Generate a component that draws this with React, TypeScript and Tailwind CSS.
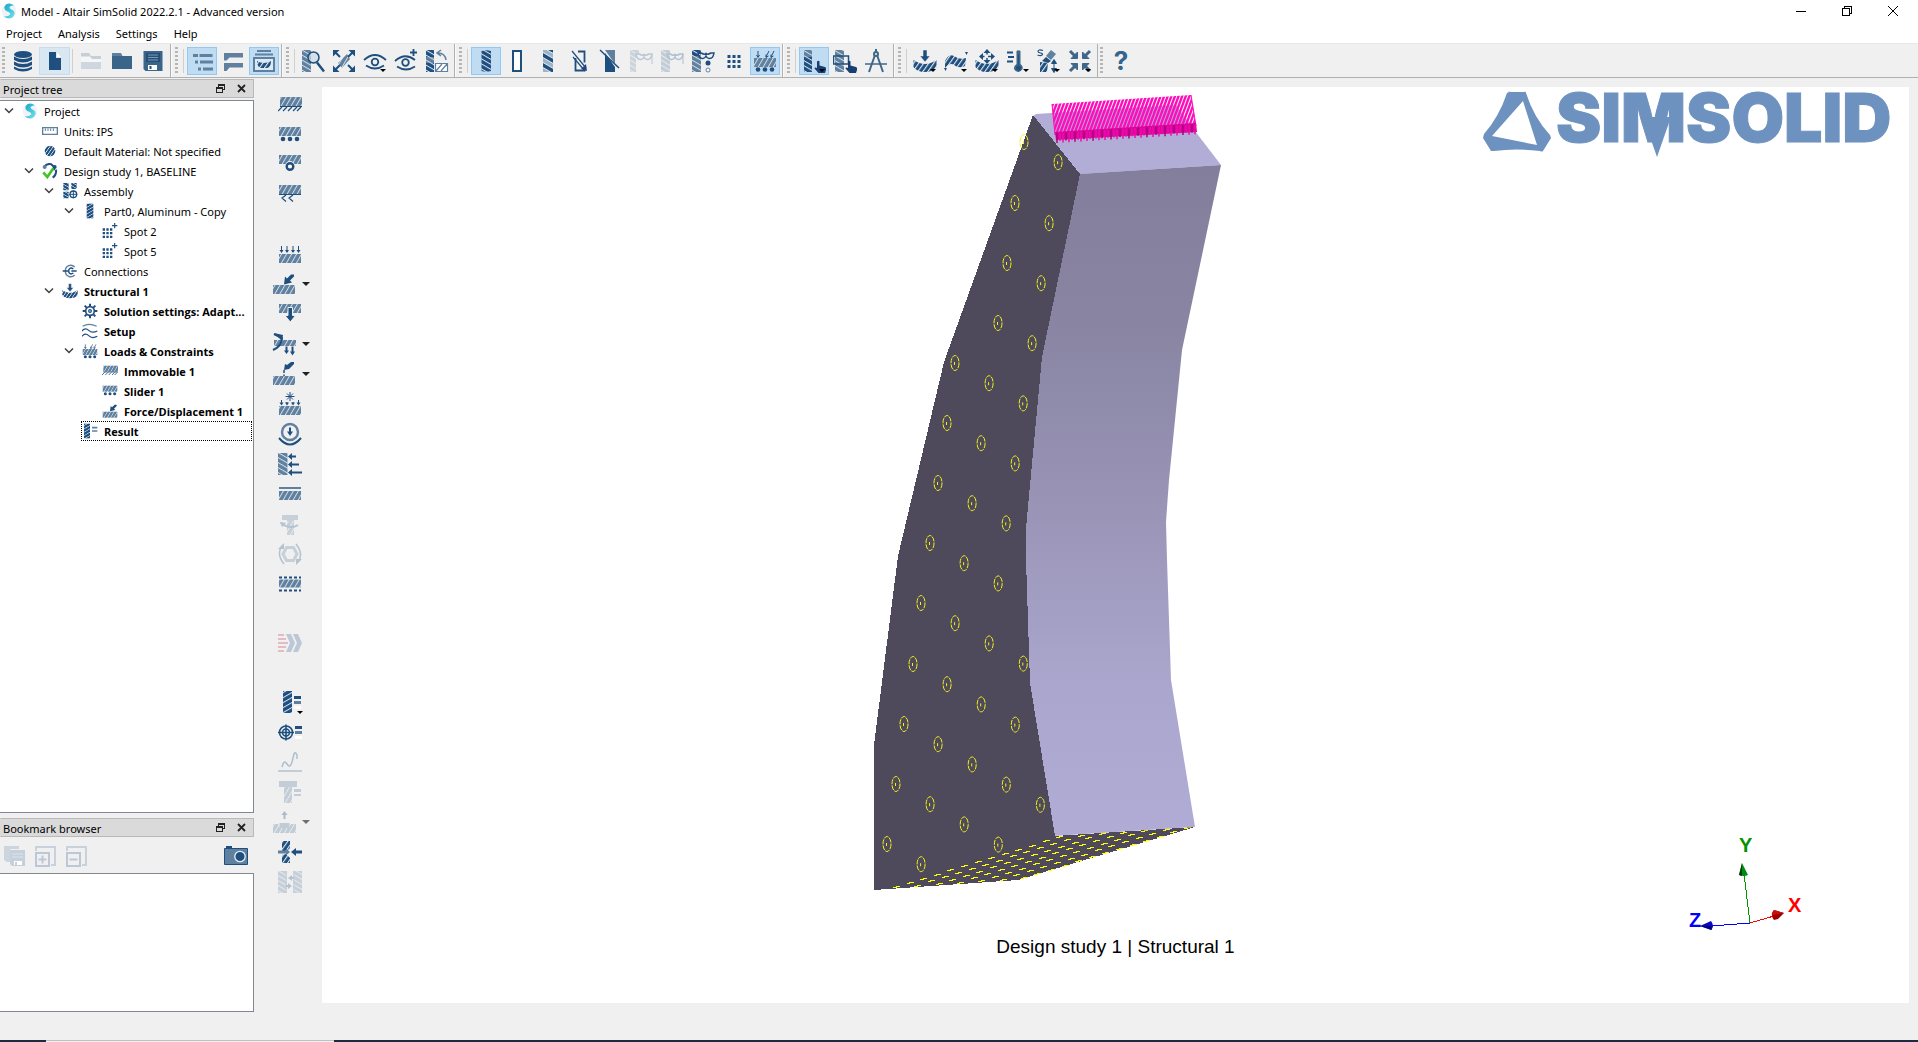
import React, { ReactNode } from "react";

const D = "#1f4f7f";
const M = "#5f809f";

/* Shared hatch fills used by nearly every icon */
function Hatches() {
  return (
    <svg className="absolute h-0 w-0" aria-hidden="true">
      <defs>
        <pattern id="hm" width="5" height="6" patternUnits="userSpaceOnUse" patternTransform="skewX(-30)">
          <rect width="5" height="6" fill={M} />
          <rect width="1.1" height="6" fill="#d6dfe8" />
        </pattern>
        <pattern id="hd" width="5" height="6" patternUnits="userSpaceOnUse" patternTransform="skewX(-35)">
          <rect width="5" height="6" fill={D} />
          <rect width="1.3" height="6" fill="#e6edf3" />
        </pattern>
        <pattern id="vm" width="6" height="5" patternUnits="userSpaceOnUse" patternTransform="skewY(30)">
          <rect width="6" height="5" fill={M} />
          <rect width="6" height="1.1" fill="#d6dfe8" />
        </pattern>
        <pattern id="vd" width="6" height="5" patternUnits="userSpaceOnUse" patternTransform="skewY(-30)">
          <rect width="6" height="5" fill={D} />
          <rect width="6" height="1.1" fill="#dce8f2" />
        </pattern>
        <pattern id="vx" width="6" height="5" patternUnits="userSpaceOnUse" patternTransform="skewY(30)">
          <rect width="6" height="5" fill={D} />
          <rect width="6" height="1.1" fill="#dce8f2" />
        </pattern>
        <pattern id="vs" width="6" height="10" patternUnits="userSpaceOnUse" patternTransform="skewY(30)">
          <rect width="6" height="10" fill="#9db3c8" />
          <rect width="6" height="4" fill={D} />
          <rect y="4" width="6" height="1" fill="#e4eaf0" />
          <rect y="9" width="6" height="1" fill="#e4eaf0" />
        </pattern>
        <linearGradient id="sg" x1="0" y1="0" x2="1" y2="1">
          <stop offset="0" stopColor="#1f9fc0" />
          <stop offset="0.5" stopColor="#3ec6dc" />
          <stop offset="1" stopColor="#7fe0ea" />
        </linearGradient>
      </defs>
    </svg>
  );
}

const mask = (x: number, y: number, c: string) => (
  <path d={`M${x} ${y}h3q4 2 5 0.5q1 1.5 5-0.5h3q-1 6-5 5.5q-2 0-3-2.5q-1 2.5-3 2.5q-4 0.500-5-5.500z`} fill="none" stroke={c} strokeWidth="1.5" />
);
const hand = (
  <path d="M15 12.500q1.500-1.500 2.500 0v4l5.500 1.500q1.500 0.500 1 3l-1 3h-6.500l-4-4.500q0-1.500 2.500-0.500z" fill="#173f72" />
);
const smile = <path d="M0.500 11q6 4 11.500 4t11.500-4v7q-3.500 5-11.500 5t-11.500-5z" fill="url(#hd)" />;

const art: Record<string, ReactNode> = {
  s: (
    <g>
      <circle cx="12" cy="12" r="11" fill="#eef3f5" />
      <path d="M20 4Q14 -1 8 2Q2 7 8 12Q14 14 14 17Q12 21 4 20Q11 26 18 21Q23 15 18 11Q12 9 13 6Q15 3 20 4z" fill="url(#sg)" />
    </g>
  ),
  db: (
    <g fill={D}>
      <ellipse cx="12" cy="5.500" rx="9" ry="3.500" />
      <path d="M3 7.500q9 5 18 0v3.500q-9 5-18 0zM3 12.500q9 5 18 0v3.500q-9 5-18 0zM3 17.500q9 5 18 0v2.500q-9 5-18 0z" />
    </g>
  ),
  file: (
    <g>
      <path d="M6 3h7v6h5v12h-12z" fill={D} />
      <path d="M14 3.500l4 4.500h-4z" fill="#fff" />
    </g>
  ),
  open: (
    <g>
      <path d="M2 4h8l2 3h10v13h-20z" fill="#c5cfd8" />
      <path d="M2 7.500h9l2 2.500h9v3h-20z" fill="#f4f6f8" />
      <path d="M2 13h20v7h-20z" fill="#ced7df" />
    </g>
  ),
  folder: (
    <g>
      <path d="M2 4h9l1.500 3h-10.500z" fill={M} />
      <path d="M2 7h20v13h-20z" fill="#3b6489" />
    </g>
  ),
  save: (
    <g>
      <path d="M2.500 2h19v20h-17l-2-2z" fill="#3b6489" />
      <path d="M5 4h14v9h-14z" fill="#244f78" />
      <path d="M7 6h10M7 8.500h10M7 11h10" stroke="#7d9ab4" />
      <path d="M7 16h9v5h-9z" fill="#fff" />
      <path d="M8.500 17h2v3h-2z" fill={D} />
    </g>
  ),
  list: (
    <g fill={M}>
      <path d="M3 5h5v3h-5zM9.500 5h13v3h-13zM5 11.500h3v3h-3zM10 11.500h13v3h-13zM8 18.500h3v3h-3zM13 18.500h10v3h-10z" />
    </g>
  ),
  chat: <path d="M3 4h19v4.500h-13.500l-3 3h-2.500zM3 14h19v4.500h-13.500l-3 3.500h-2.500z" fill={M} />,
  win: (
    <g>
      <path d="M5 1h14v2h-14zM3 4.500h18v2h-18z" fill={M} />
      <path d="M2 9h20v13h-20z" fill="#dbe9f5" stroke={M} strokeWidth="2" />
      <path d="M5 12q7 4 14 0q0 6-4 7h-6q-4-1-4-7z" fill="url(#hd)" />
    </g>
  ),
  find: (
    <g>
      <path d="M1 1h9v22h-9z" fill="url(#vm)" />
      <path d="M16 13.500l7 9" stroke={D} strokeWidth="2.500" />
      <circle cx="12.500" cy="8.500" r="5.500" fill="#c9d8e6" fillOpacity="0.700" stroke={D} strokeWidth="1.500" />
    </g>
  ),
  explode: (
    <g>
      <path d="M6 14l9-9l3 5l-8 9z" fill="url(#hm)" />
      <path d="M3 3l5 5M21 3l-5 5M3 21l5-5M21 21l-5-5" stroke={D} strokeWidth="2" />
      <path d="M1 1h6.500l-6.500 6.500zM23 1h-6.500l6.500 6.500zM1 23h6.500l-6.500-6.500zM23 23h-6.500l6.500-6.500z" fill={D} />
    </g>
  ),
  eye: (
    <g fill="none" stroke={D} strokeWidth="1.800">
      <path d="M1 11q11-10 22 0M3 16.500q9 6 18 0" />
      <circle cx="12" cy="13" r="3.300" />
    </g>
  ),
  eyeplus: (
    <g fill="none" stroke={D} strokeWidth="1.800">
      <path d="M1 12q10-9 20-1M3 17.500q9 6 18 0M19.500 0v7M16 3.500h7" />
      <circle cx="11.500" cy="13.500" r="3.300" />
    </g>
  ),
  rotate: (
    <g>
      <path d="M1 1h8v22h-8z" fill="url(#vm)" />
      <path d="M1 1h8v7h-8zM1 14h8v9h-8z" fill="url(#vx)" />
      <path d="M10.500 14.500h12v8h-12zM11 22l6-7M16 22l6-7" fill="#fff" stroke={M} strokeWidth="1.200" />
      <path d="M13 4q7 0 8 7M16 1l-4 3l4 3" fill="none" stroke={M} strokeWidth="1.500" />
    </g>
  ),
  part: <path d="M7.500 2q5-1.500 9.500 0v20q-5 1.500-9.500 0z" fill="url(#vx)" />,
  treepart: <path d="M7 1h10v22h-10z" fill="url(#vd)" />,
  outline: <path d="M8 2h8v20h-8z" fill="#fff" stroke={D} strokeWidth="2" />,
  partlight: <path d="M7 1h10v22h-10z" fill="url(#vs)" />,
  section: (
    <g>
      <path d="M8.500 9v12.500h9v-3M11 2.500h6.500v11" fill="none" stroke={D} strokeWidth="1.800" />
      <path d="M5 2l14 17M6 8l12 14" stroke={D} strokeWidth="1.200" />
      <path d="M20 22l-1-7l-5 5z" fill="#27467f" />
    </g>
  ),
  half: (
    <g>
      <path d="M7 1h10v14z" fill={M} />
      <path d="M7 4v19h10v-5z" fill={D} />
      <path d="M2 1l19 18" stroke={D} strokeWidth="1.500" />
    </g>
  ),
  mask1: (
    <g opacity="0.250">
      <path d="M1 1h9v4h-3v18h-6z" fill="url(#vm)" />
      {mask(7, 5, D)}
      <path d="M23 6v9" stroke={D} />
    </g>
  ),
  mask2: (
    <g opacity="0.300">
      <path d="M1 1h9v22h-9z" fill="url(#vm)" />
      {mask(7, 5, D)}
      <path d="M23 6v9" stroke={D} />
    </g>
  ),
  mask3: (
    <g>
      <path d="M1 1h9v22h-9z" fill="url(#vm)" />
      <path d="M1 1h9v6h-9z" fill="url(#vx)" />
      {mask(7, 4, D)}
      <circle cx="17" cy="14" r="2.500" fill={D} />
      <circle cx="17" cy="21" r="2" fill="#fff" stroke={M} />
    </g>
  ),
  dots: <path d="M5.500 6h3v3h-3zM10.500 6h3v3h-3zM15.500 6h3v3h-3zM5.500 11h3v3h-3zM10.500 11h3v3h-3zM15.500 11h3v3h-3zM5.500 16h3v3h-3zM10.500 16h3v3h-3zM15.500 16h3v3h-3z" fill={D} />,
  loads: (
    <g>
      <path d="M1 9h22v9h-22z" fill="url(#hm)" />
      <path d="M5 2v6M3.500 6l1.500 2.500l1.500-2.500M16 2l-3 6M13 5.500v3l2.500-1.500M21 2l-3 6M18 5.500v3l2.500-1.500" stroke={D} fill="none" />
      <circle cx="5" cy="20.500" r="2.300" fill={D} />
      <circle cx="12" cy="20.500" r="2.300" fill={D} />
      <circle cx="19" cy="20.500" r="2.300" fill={D} />
    </g>
  ),
  pick: (
    <g>
      <path d="M2 1h8v7h-8z" fill="url(#vm)" />
      <path d="M2 8h8v15h-8z" fill="url(#vx)" />
      {hand}
    </g>
  ),
  pickbox: (
    <g>
      <path d="M2 1h9v22h-9z" fill="url(#vm)" />
      <path d="M0.500 7h15v8h-15z" fill="none" stroke={D} strokeWidth="1.500" />
      {hand}
    </g>
  ),
  compass: (
    <g fill="none" stroke="#3f6789" strokeWidth="2">
      <path d="M11 6l-6 17M13 6l6 17M12 0v3" />
      <circle cx="12" cy="5" r="2" />
      <path d="M1 15h22" strokeWidth="1.500" />
    </g>
  ),
  structural: (
    <g>
      {smile}
      <path d="M10 1h4v6h3l-5 6l-5-6h3z" fill={D} stroke="#f0f0f0" strokeWidth="0.500" />
    </g>
  ),
  modal: (
    <g>
      <path d="M1 12q4-8 9-5q5 4 12 2l-1 8q-6 3-11-1q-4-3-9 3z" fill="url(#hd)" />
      <path d="M21 3h3l-1.500 3zM0 19h3l-1.500 3z" fill={D} />
    </g>
  ),
  dynamics: (
    <g>
      {smile}
      <path d="M12 1v13M5 7.500h14" stroke={D} strokeWidth="1.500" strokeDasharray="4.500 3.500" />
      <path d="M12 0l3.500 4h-7zM12 15l3.500-4h-7zM4 7.500l4-3.500v7zM20 7.500l-4-3.500v7z" fill={D} />
    </g>
  ),
  thermal: (
    <g>
      <path d="M1 3.500h6M2 8h6M1 12.500h6" stroke={D} strokeWidth="2" />
      <path d="M10.500 2q2-1.500 4 0v13q3 2 2 5q-2 3-4 3q-3 0-4.500-3q-0.500-3 2.500-5z" fill="#3f6789" />
      <circle cx="12.500" cy="19" r="2.500" fill={D} />
      <path d="M12.500 6v10" stroke={D} />
    </g>
  ),
  fatigue: (
    <g>
      <path d="M3 13l8 1l-1 9h-7z" fill="url(#hd)" />
      <path d="M9 7l5-6l5 4l-5 6z" fill={M} />
      <path d="M5 12l4-4l5 4l-3 2z" fill={D} />
      <path d="M6 1.500q-5-1.500-5 1q0 1 2.500 1.500t2 1.500q-1 2-5 0.500" fill="none" stroke={D} strokeWidth="1.200" />
      <path d="M17 13v8M14.500 14.500l2.500-4l2.500 4zM14.500 19.500l2.500 4l2.500-4z" fill={D} stroke={D} />
    </g>
  ),
  collapse: (
    <g fill="#3f6789" stroke="#3f6789" strokeWidth="3">
      <path d="M2 2l5 5M22 2l-5 5M2 22l5-5M22 22l-5-5" />
      <path d="M9.500 3v6.500h-6.500zM14.500 3v6.500h6.500zM9.500 21v-6.500h-6.500zM14.500 21v-6.500h6.500z" strokeWidth="1" />
    </g>
  ),
  immovable: (
    <g>
      <path d="M2 4h22v9h-22z" fill="url(#hm)" />
      <path d="M2 13.500h22M4 14l-4 4M9 14l-4 4M14 14l-4 4M19 14l-4 4M23 14l-4 4" stroke={D} strokeWidth="1.200" />
    </g>
  ),
  slider: (
    <g>
      <path d="M1 4h22v9h-22z" fill="url(#hm)" />
      <circle cx="5" cy="16" r="2.300" fill={D} />
      <circle cx="12" cy="16" r="2.300" fill={D} />
      <circle cx="19" cy="16" r="2.300" fill={D} />
    </g>
  ),
  hinge: (
    <g>
      <path d="M1 2h22v9h-22z" fill="url(#hm)" />
      <circle cx="12" cy="13" r="5" fill="#f0f0f0" />
      <circle cx="12" cy="13.500" r="3.300" fill="#fff" stroke={D} strokeWidth="2.400" />
    </g>
  ),
  sleeve: (
    <g>
      <path d="M1 2h22v9h-22z" fill="url(#hm)" />
      <path d="M1 11.500h22M8 12l-4 3l4 3.500M15 12l-4 3l4 3.500" fill="none" stroke={D} strokeWidth="1.200" />
    </g>
  ),
  pressure: (
    <g>
      <path d="M1 12h22v9h-22z" fill="url(#hm)" />
      <path d="M3.500 4v6M9 4v6M15 4v6M20.500 4v6" stroke={D} />
      <path d="M1.500 8h4l-2 3zM7 8h4l-2 3zM13 8h4l-2 3zM18.500 8h4l-2 3z" fill={D} />
    </g>
  ),
  force: (
    <g>
      <path d="M1 13h22v9h-22z" fill="url(#hm)" />
      <path d="M12 12.500l1-8l2 2l4-4h3v2l-4 4l2 2z" fill={D} />
    </g>
  ),
  gravity: (
    <g>
      <path d="M1 2h22v9h-22z" fill="url(#hm)" />
      <path d="M10 5.500h4.500v8h3l-5.200 6.500l-5.300-6.500h3z" fill={D} stroke="#f0f0f0" />
    </g>
  ),
  inertia: (
    <g>
      <path d="M2 8h22v6h-22z" fill="url(#hm)" />
      <path d="M2 2l8 4q0 8-9 12" fill="none" stroke={D} strokeWidth="2" />
      <path d="M2 1l9 2l-1 6z" fill={D} />
      <path d="M13.500 14.500h2v4h1.500l-2.500 3.500l-2.500-3.500h1.500zM19.500 14.500h2v5h1.500l-2.500 4l-2.500-4h1.500z" fill={D} />
    </g>
  ),
  remote: (
    <g>
      <path d="M1 14h22v9h-22z" fill="url(#hm)" />
      <path d="M12 8l1-6l2 1l4-3h3v2l-5 5z" fill={D} />
      <path d="M12 8v6" stroke={D} strokeWidth="1.500" strokeDasharray="3 1.500" />
    </g>
  ),
  thermalload: (
    <g>
      <path d="M1 14h22v9h-22z" fill="url(#hm)" />
      <path d="M3.500 8v4M9 10v2M15 10v2M20.500 8v4M12 0v9M7.500 4.500h9M9 1.500l6 6M15 1.500l-6 6" stroke={D} />
      <path d="M1.500 10.500h4l-2 3zM7 10.500h4l-2 3zM13 10.500h4l-2 3zM18.500 10.500h4l-2 3z" fill={D} />
    </g>
  ),
  bearing: (
    <g fill="none">
      <circle cx="12" cy="10" r="8" stroke={M} strokeWidth="2.400" />
      <path d="M1 16q11 13 22 0" stroke={D} strokeWidth="2" />
      <path d="M11 5.500h2v4h2l-3 4.500l-3-4.500h2z" fill={D} />
    </g>
  ),
  hydro: (
    <g>
      <path d="M0 1h9.500v22h-9.500z" fill="url(#vm)" />
      <path d="M13 4.500h5M13 12.500h8M13 20.500h11" stroke={D} strokeWidth="2" />
      <path d="M10 4.500l4-3.500v7zM10 12.500l4-3.500v7zM10 20.500l4-3.500v7z" fill={D} />
    </g>
  ),
  initial: (
    <g>
      <path d="M1 5h22v2h-22z" fill={M} />
      <path d="M1 9h22v9h-22z" fill="url(#hm)" />
    </g>
  ),
  bolt: (
    <g opacity="0.280">
      <path d="M4 3h16v5h-4v15h-7v-15h-5z" fill={M} />
      <path d="M9 9h7v14h-7z" fill="url(#hm)" />
      <path d="M3 11q9 7 17 2" fill="none" stroke={D} strokeWidth="2" />
      <path d="M2 10l6 1l-4 4z" fill={D} />
    </g>
  ),
  nut: (
    <g opacity="0.280" fill="none" stroke={M}>
      <path d="M8.500 5.500h7l3.500 6.500l-3.500 6.500h-7l-3.500-6.500z" strokeWidth="3" />
      <path d="M6 22q-8-10-2-18M18 2q8 10 2 18" stroke={D} strokeWidth="1.500" />
      <path d="M0 7l6-6v6zM24 17l-6 6v-6z" fill={D} stroke="none" />
    </g>
  ),
  virtual: (
    <g>
      <path d="M1 7.500h22v8h-22z" fill="url(#hm)" />
      <path d="M1 5.500h22M1 18.500h22" stroke={D} strokeWidth="2" strokeDasharray="3 2" />
    </g>
  ),
  solve: (
    <g>
      <path d="M0 4h6M0 8h8M0 12h10M0 16h8M0 20h6" stroke="#e3bcc3" strokeWidth="1.800" />
      <path d="M8 3h5l4 9l-4 9h-5l4-9zM15 3h5l4 9l-4 9h-5l4-9z" fill="#bcc8d6" />
    </g>
  ),
  result: (
    <g>
      <path d="M5 1h9v22h-9z" fill="url(#vd)" />
      <path d="M16 6h7v3h-7z" fill={D} />
      <path d="M16 11h7v3h-7z" fill={M} />
      <path d="M16 16h7v3h-7z" fill="#fff" />
    </g>
  ),
  probe: (
    <g>
      <path d="M17 6h7v3h-7z" fill={D} />
      <path d="M17 11h7v3h-7z" fill={M} />
      <path d="M17 16h7v3h-7z" fill="#fff" />
      <g fill="none" stroke={D} strokeWidth="1.600">
        <circle cx="8" cy="12.500" r="6.500" />
        <circle cx="8" cy="12.500" r="3.500" />
        <path d="M0 12.500h16M8 4.500v16" />
      </g>
    </g>
  ),
  curve: (
    <g opacity="0.300" fill="none">
      <path d="M4 17q2-8 5-3t5-2l2-8q1-3 3 1v4" stroke={D} strokeWidth="1.500" />
      <path d="M0 21h24" stroke={M} strokeWidth="2" />
    </g>
  ),
  boltres: (
    <g opacity="0.300">
      <path d="M1 1h18v6h-18z" fill={M} />
      <path d="M6 7h8v16h-8z" fill="url(#hm)" />
      <path d="M16 9h7v3h-7zM16 14h7v2h-7z" fill={M} />
    </g>
  ),
  reaction: (
    <g opacity="0.320">
      <path d="M1 14h5l2 4h9l2-4h5v9h-23z" fill="url(#hm)" />
      <path d="M7.500 13h10v5h-10z" fill={M} />
      <path d="M11.500 4h2v5h-2zM12.500 1l3 4h-6z" fill={D} />
    </g>
  ),
  safety: (
    <g>
      <path d="M4 1h8v7l-4 4h-4zM4 15l4-1l4 4v5h-8z" fill="url(#hd)" />
      <path d="M0 10.500h8v-2l4 3.500l-4 3.500v-2h-8z" fill={M} />
      <path d="M24 10.500h-6v-2.500l-5 4l5 4v-2.500h6z" fill={D} />
    </g>
  ),
  contact: (
    <g opacity="0.280">
      <path d="M0 1h9v22h-9zM15 1h9v22h-9z" fill="url(#vm)" />
      <path d="M8 1v22M16 1v22" stroke={M} />
      <path d="M10 8l4-3v2h2v2h-2v2zM14 16l-4-3v2h-2v2h2v2z" fill={D} />
    </g>
  ),
  ruler: (
    <g>
      <path d="M1 7h22v10h-22z" fill="#fff" stroke={M} strokeWidth="2" />
      <path d="M5 8v4M9 8v4M13 8v4M17 8v4" stroke={M} strokeWidth="1.500" />
    </g>
  ),
  material: <circle cx="12" cy="12" r="8" fill="url(#hd)" />,
  study: (
    <g fill="none">
      <path d="M3 6q4-6 11-4l4 4v5M21 10q1 8-5 12" stroke={D} strokeWidth="3" />
      <circle cx="4" cy="6" r="3" fill={M} />
      <circle cx="19" cy="6" r="3" fill={D} />
      <path d="M2 14l6 7l9-13" stroke="#42c429" strokeWidth="4" />
    </g>
  ),
  assembly: (
    <g>
      <path d="M2 0h8v11h-8zM14 0h8v9h-8zM2 13h8v10h-8z" fill="url(#vx)" />
      <circle cx="17" cy="17" r="5" fill="none" stroke={D} strokeWidth="2" />
      <path d="M17 11v12M11 17h12" stroke={D} strokeWidth="1.500" />
    </g>
  ),
  spot: (
    <g>
      <path d="M1 8h3.500v3.500h-3.500zM6.500 8h3.500v3.500h-3.500zM12 8h3.500v3.500h-3.500zM1 13.500h3.500v3.500h-3.500zM6.500 13.500h3.500v3.500h-3.500zM12 13.500h3.500v3.500h-3.500zM1 19h3.500v3.500h-3.500zM6.500 19h3.500v3.500h-3.500zM12 19h3.500v3.500h-3.500z" fill={D} />
      <path d="M19 0v8M15 4h8" stroke={D} strokeWidth="1.800" />
    </g>
  ),
  conn: (
    <g fill="none" stroke={D} strokeWidth="2.200">
      <path d="M19 6q-4-4-9-2t-5 8t5 8t9-2" stroke={M} />
      <path d="M17 9q-3-2-5-1t-2 4t2 4t5-1M1 12h9M14 12h8" />
    </g>
  ),
  gear: (
    <g fill="none" stroke={D}>
      <circle cx="12" cy="12" r="6.500" strokeWidth="2.500" />
      <circle cx="12" cy="12" r="2" strokeWidth="2" />
      <path d="M12 1v4M12 19v4M1 12h4M19 12h4M4 4l3 3M17 17l3 3M20 4l-3 3M7 17l-3 3" strokeWidth="3" />
    </g>
  ),
  setup: (
    <g fill="none" stroke={M} strokeWidth="1.800">
      <path d="M1 5q9-6 21 0" />
      <path d="M0 12q5-6 10-1t13 1M0 20q5-6 10-1t13 1" stroke={D} />
    </g>
  ),
  treeresult: (
    <g>
      <path d="M3 1h9v22h-9z" fill="url(#vd)" />
      <path d="M15 7h8M15 12h8" stroke={M} strokeWidth="2.500" />
    </g>
  ),
};

function Icon({ name, small }: { name: string; small?: boolean }) {
  return (
    <svg viewBox="0 0 24 24" className={small ? "h-4 w-4 shrink-0" : "h-6 w-6 shrink-0"} aria-hidden="true">
      {art[name]}
    </svg>
  );
}

type Tool = { icon: string; label: string; on?: boolean; drop?: boolean };

function ToolButton({ icon, label, on, drop }: Tool) {
  return (
    <button
      aria-label={label}
      className={
        "relative mr-px flex h-7 w-[30px] items-center justify-center border " +
        (on ? "border-[#90c8f6] bg-[#c0dcf3]" : "border-transparent")
      }
    >
      {icon === "help" ? (
        <span className="font-['Inter'] text-[26px] font-bold leading-none text-[#33658d]">?</span>
      ) : (
        <Icon name={icon} />
      )}
      {drop && (
        <span className="absolute bottom-[2px] right-[3px] h-0 w-0 border-x-[3px] border-t-[3px] border-x-transparent border-t-black" />
      )}
    </button>
  );
}

const Rule = () => <span className="mr-[3px] h-6 w-px bg-[#cfcfcf]" />;

const Grip = () => (
  <span className="mr-[3px] h-7 w-[3px] bg-[repeating-linear-gradient(to_bottom,#b5b5b5_0px,#b5b5b5_2px,transparent_2px,transparent_4px)]" />
);

function Section({ children, first }: { children: ReactNode; first?: boolean }) {
  return (
    <div className={"flex items-center border-r border-r-[#b0b0b0] pr-px " + (first ? "pl-0.5" : "border-l border-l-[#fafafa] pl-[3px]")}>
      <Grip />
      {!first && (
        <span className="flex pl-0.5">
          <Rule />
        </span>
      )}
      {children}
    </div>
  );
}

const sections: Tool[][] = [
  [
    { icon: "list", label: "Project tree", on: true },
    { icon: "chat", label: "Messages" },
    { icon: "win", label: "Bookmark browser", on: true },
  ],
  [
    { icon: "find", label: "Find part" },
    { icon: "explode", label: "Fit view" },
    { icon: "eye", label: "Views", drop: true },
    { icon: "eyeplus", label: "Add view" },
    { icon: "rotate", label: "Rotate" },
  ],
  [
    { icon: "part", label: "Shaded", on: true },
    { icon: "outline", label: "Wireframe" },
    { icon: "partlight", label: "Transparent" },
    { icon: "section", label: "Section plane" },
    { icon: "half", label: "Section cut" },
    { icon: "mask1", label: "Hide" },
    { icon: "mask2", label: "Hide others" },
    { icon: "mask3", label: "Show" },
    { icon: "dots", label: "Show spots" },
    { icon: "loads", label: "Show loads", on: true },
  ],
  [
    { icon: "pick", label: "Pick", on: true, drop: true },
    { icon: "pickbox", label: "Box pick" },
    { icon: "compass", label: "Measure" },
  ],
  [
    { icon: "structural", label: "Structural", drop: true },
    { icon: "modal", label: "Modal", drop: true },
    { icon: "dynamics", label: "Dynamics", drop: true },
    { icon: "thermal", label: "Thermal", drop: true },
    { icon: "fatigue", label: "Fatigue", drop: true },
    { icon: "collapse", label: "Inertia", drop: true },
  ],
];

type Row = { level: number; icon: string; text: string; open?: boolean; bold?: boolean; sel?: boolean };
const rows: Row[] = [
  { level: 0, icon: "s", text: "Project", open: true },
  { level: 1, icon: "ruler", text: "Units: IPS" },
  { level: 1, icon: "material", text: "Default Material: Not specified" },
  { level: 1, icon: "study", text: "Design study 1, BASELINE", open: true },
  { level: 2, icon: "assembly", text: "Assembly", open: true },
  { level: 3, icon: "treepart", text: "Part0, Aluminum - Copy", open: true },
  { level: 4, icon: "spot", text: "Spot 2" },
  { level: 4, icon: "spot", text: "Spot 5" },
  { level: 2, icon: "conn", text: "Connections" },
  { level: 2, icon: "structural", text: "Structural 1", open: true, bold: true },
  { level: 3, icon: "gear", text: "Solution settings: Adapt...", bold: true },
  { level: 3, icon: "setup", text: "Setup", bold: true },
  { level: 3, icon: "loads", text: "Loads & Constraints", open: true, bold: true },
  { level: 4, icon: "immovable", text: "Immovable 1", bold: true },
  { level: 4, icon: "slider", text: "Slider 1", bold: true },
  { level: 4, icon: "force", text: "Force/Displacement 1", bold: true },
  { level: 3, icon: "treeresult", text: "Result", bold: true, sel: true },
];

function TreeRow({ row }: { row: Row }) {
  return (
    <li role="treeitem" aria-selected={!!row.sel} aria-level={row.level + 1} className="flex h-5 items-center pr-px">
      <span className="shrink-0" style={{ width: row.level * 20 }} />
      <span className="flex w-[21px] shrink-0 items-center pl-1">
        {row.open && (
          <button aria-label={"Collapse " + row.text}>
            <svg viewBox="0 0 10 6" className="h-1.5 w-2.5">
              <path d="M1 0.500l4 4l4-4" fill="none" stroke="#404040" strokeWidth="1.500" />
            </svg>
          </button>
        )}
      </span>
      <span
        className={
          "flex h-5 min-w-0 flex-1 items-center gap-1.5 whitespace-nowrap border border-dotted " +
          (row.sel ? "border-black " : "border-transparent ") +
          (row.bold ? "font-['Open_Sans',sans-serif] font-bold" : "")
        }
      >
        <Icon name={row.icon} small />
        <span className="pt-0.5">{row.text}</span>
      </span>
    </li>
  );
}

function DockTitle({ text }: { text: string }) {
  return (
    <div className="flex h-[19px] shrink-0 items-center border border-[#b9b9b9] border-l-transparent bg-[#dadada] pl-0.5 pr-[7px]">
      <h2 className="flex-1 pt-0.5">{text}</h2>
      <button aria-label={"Float " + text} className="mr-3">
        <svg viewBox="0 0 9 9" className="h-[9px] w-[9px]" fill="none" stroke="#222" shapeRendering="crispEdges">
          <path d="M2.500 3v-2.500h6v5h-2M2 1.500h7M0.500 3.500h6v5h-6zM0 4.500h7" />
        </svg>
      </button>
      <button aria-label={"Close " + text}>
        <svg viewBox="0 0 9 9" className="h-[9px] w-[9px]" stroke="#222" strokeWidth="1.800">
          <path d="M1 1l7 7M8 1l-7 7" />
        </svg>
      </button>
    </div>
  );
}

type Side = { icon: string; label: string; drop?: boolean; dim?: boolean } | null;
const side: Side[] = [
  { icon: "immovable", label: "Immovable support" },
  { icon: "slider", label: "Sliding support" },
  { icon: "hinge", label: "Hinge support" },
  { icon: "sleeve", label: "Sleeve support" },
  null,
  { icon: "pressure", label: "Pressure" },
  { icon: "force", label: "Force", drop: true },
  { icon: "gravity", label: "Gravity" },
  { icon: "inertia", label: "Inertia load", drop: true },
  { icon: "remote", label: "Remote load", drop: true },
  { icon: "thermalload", label: "Thermal load" },
  { icon: "bearing", label: "Bearing load" },
  { icon: "hydro", label: "Hydrostatic pressure" },
  { icon: "initial", label: "Volume expansion" },
  { icon: "bolt", label: "Bolt tightening" },
  { icon: "nut", label: "Nut tightening" },
  { icon: "virtual", label: "Virtual connector" },
  null,
  { icon: "solve", label: "Solve" },
  null,
  { icon: "result", label: "Results" },
  { icon: "probe", label: "Pick info" },
  { icon: "curve", label: "Plot" },
  { icon: "boltres", label: "Bolt forces" },
  { icon: "reaction", label: "Reactions", drop: true, dim: true },
  { icon: "safety", label: "Safety factor" },
  { icon: "contact", label: "Contact forces" },
];

const spotRows: [number, number, number][] = [
  [1024, 142, 2], [1015, 203, 2], [1007, 263, 2], [998, 323, 2],
  [955, 363, 3], [947, 423, 3], [938, 483, 3], [930, 543, 3],
  [921, 603, 4], [913, 664, 4], [904, 724, 5], [896, 784, 4], [887, 844, 2],
];

function Model() {
  const spots = spotRows.flatMap(([x, y, n]) =>
    Array.from({ length: n }, (_, i) => [x + i * 34.1, y + i * 20.2])
  );
  const dashes: [number, number][] = [];
  for (let j = 0; j < 14; j++) for (let i = 0; i < 7; i++) dashes.push([893 + i * 21.3 + j * 13.6, 887 - i * 1.5 - j * 4.15]);
  return (
    <svg viewBox="322 87 1587 916" className="absolute inset-0 h-full w-full" role="img" aria-label="Deformed part with loads and constraints">
      <defs>
        <linearGradient id="front" x1="0" y1="0" x2="0" y2="1">
          <stop offset="0" stopColor="#827e9b" />
          <stop offset="0.25" stopColor="#8985a3" />
          <stop offset="0.5" stopColor="#9994b6" />
          <stop offset="0.78" stopColor="#aaa6cd" />
          <stop offset="1" stopColor="#b0acd5" />
        </linearGradient>
        <clipPath id="base">
          <path d="M874 890L1055 836L1196 827L1018 881z" />
        </clipPath>
        <clipPath id="arrows">
          <path d="M1052 104L1191 95L1196 126L1055 135z" />
        </clipPath>
      </defs>
      <path d="M1033 116L1036 114L1176 105L1198 135L1221 165L1080 174z" fill="#b1add6" />
      <path d="M1079 174L1221 165L1182 350L1169 480L1166 522L1167 560L1171 680L1195 827L1054 836L1029 683L1025 560L1025 528L1041 357z" fill="url(#front)" />
      <path d="M1033 115L1080 174L1042 357L1026 528L1026 560L1030 683L1055 836L1195 827L1018 880L874 890V745L898 556L944 362z" fill="#4e4a5b" shapeRendering="crispEdges" />
      <g clipPath="url(#base)" stroke="#ffff00" strokeWidth="1" shapeRendering="crispEdges" fill="none">
        {dashes.map(([x, y], k) => (
          <path key={k} d={`M${x} ${y + 0.5}h3v-1h4`} />
        ))}
      </g>
      <g fill="none" stroke="#f2f21a" strokeWidth="1" strokeDasharray="5 1">
        {spots.map(([x, y], k) => (
          <g key={k}>
            <ellipse cx={x} cy={y} rx="4" ry="7.500" />
            <path d={`M${x - 0.5} ${y - 1}v3`} />
          </g>
        ))}
      </g>
      <g clipPath="url(#arrows)" stroke="#ff0dbb" strokeWidth="2.400">
        {Array.from({ length: 45 }, (_, i) => (
          <path key={i} d={`M${1036 + i * 3.7} ${140 - i * 0.24}l14 -38`} />
        ))}
      </g>
      <path d="M1052 104L1055 135M1191 95L1196 126" stroke="#ff0dbb" strokeWidth="1" />
      <path d="M1055 132L1196 123L1197 132L1056 140z" fill="#d9069b" />
      <g strokeWidth="1.500">
        {Array.from({ length: 47 }, (_, i) => (
          <path key={i} d={`M${1057 + i * 3} ${133 - i * 0.19}v${i % 2 ? 8 : 10}`} stroke={i % 3 ? "#f00ab0" : "#a80578"} />
        ))}
      </g>
    </svg>
  );
}

function Logo() {
  return (
    <svg viewBox="0 -18 428 90" className="absolute -top-3.5 right-px h-[90px] w-[428px]" role="img" aria-label="SIMSOLID">
      <g fill="#6e92bf">
        <path
          fillRule="evenodd"
          d="M29 1Q27 0 31 1H44Q46 0 46 2Q54 27 70 44L71 47L63 60Q62 61 60 60Q36 57 14 60L11 60L3 47L4 43Q19 26 27 2zM43 10L12 45L57 54z"
        />
        <text x="76" y="51" fontFamily="Inter" fontWeight="900" fontSize="68" stroke="#6e92bf" strokeWidth="1">
          SIMSOLID
        </text>
        <path d="M163 26h28l-14 40z" />
      </g>
    </svg>
  );
}

function Triad() {
  return (
    <svg viewBox="-10 -10 140 110" className="absolute bottom-[65px] right-[88px] h-[110px] w-[140px]" role="img" aria-label="Axes X Y Z">
      <g fontFamily="Liberation Sans" fontWeight="bold" fontSize="20">
        <text x="48" y="14" fill="#009400">Y</text>
        <text x="97" y="74" fill="#ff0000">X</text>
        <text x="-2" y="89" fill="#0000ff">Z</text>
      </g>
      <g shapeRendering="crispEdges">
        <path d="M59 85L53 36" stroke="#009a00" />
        <path d="M59 85L83 78" stroke="#ff0000" />
        <path d="M59 85L20 88" stroke="#0000ff" />
      </g>
      <path d="M51 25L48 37Q53 39 57 37z" fill="#008c10" />
      <path d="M51 25L48 37L51 38z" fill="#00400a" />
      <path d="M93 75L83 72Q79 77 83 82L87 81z" fill="#9c0000" />
      <path d="M93 75L83 72Q80 75 81 77z" fill="#c81010" />
      <path d="M9 88L20 83Q24 88 20 92z" fill="#0808c8" />
      <path d="M9 88L20 88L21 92z" fill="#000078" />
    </svg>
  );
}

export default function App() {
  return (
    <div className="flex h-screen flex-col overflow-hidden bg-[#f0f0f0] font-['Noto_Sans',sans-serif] text-[11px] leading-4 text-black">
      <Hatches />
      <header className="flex h-[22px] shrink-0 items-center bg-white">
        <span className="flex w-[21px] pl-px">
          <Icon name="s" small />
        </span>
        <h1 className="flex-1 pt-0.5">Model - Altair SimSolid 2022.2.1 - Advanced version</h1>
        <button aria-label="Minimize" className="flex w-[46px] justify-center">
          <svg viewBox="0 0 10 10" className="h-2.5 w-2.5" stroke="#000" shapeRendering="crispEdges"><path d="M0 5.500h10" /></svg>
        </button>
        <button aria-label="Restore" className="flex w-[46px] justify-center">
          <svg viewBox="0 0 10 10" className="h-2.5 w-2.5" stroke="#000" fill="none" shapeRendering="crispEdges">
            <path d="M2.500 2v-1.500h7v7h-2M0.500 2.500h7v7h-7z" />
          </svg>
        </button>
        <button aria-label="Close" className="mr-0.5 flex w-[46px] justify-center">
          <svg viewBox="0 0 10 10" className="h-2.5 w-2.5" stroke="#000"><path d="M0 0l10 10M10 0l-10 10" /></svg>
        </button>
      </header>
      <nav className="flex h-[22px] shrink-0 items-center gap-4 border-b border-[#e8e8e8] bg-white pl-1.5 pt-0.5">
        <button>Project</button>
        <button>Analysis</button>
        <button>Settings</button>
        <button>Help</button>
      </nav>
      <div className="flex h-[34px] shrink-0 border-b border-[#b0b0b0]">
        <Section first>
          <ToolButton icon="db" label="Database" />
          <button aria-label="New" className="mr-0.5 flex h-7 w-[31px] items-center justify-center border border-[#c4ddf1] bg-[#d9e7f2]">
            <Icon name="file" />
          </button>
          <Rule />
          <ToolButton icon="open" label="Open recent" />
          <ToolButton icon="folder" label="Open" />
          <ToolButton icon="save" label="Save" />
        </Section>
        {sections.map((s, i) => (
          <Section key={i}>
            {s.map((t) => (
              <ToolButton key={t.label} {...t} />
            ))}
          </Section>
        ))}
        <div className="flex items-center pl-0.5">
          <Grip />
          <ToolButton icon="help" label="Help" />
        </div>
      </div>

      <main className="flex min-h-0 flex-1">
        <aside className="flex w-[254px] shrink-0 flex-col pb-7 pt-px">
          <DockTitle text="Project tree" />
          <ul role="tree" aria-label="Project tree" className="mt-0.5 min-h-0 flex-1 overflow-hidden border border-l-0 border-[#828790] bg-white">
            {rows.map((r) => (
              <TreeRow key={r.text} row={r} />
            ))}
          </ul>
          <div className="h-[5px] shrink-0" />
          <DockTitle text="Bookmark browser" />
          <div className="flex h-9 shrink-0 items-center gap-[7px] pl-[3px] pr-1.5 pt-0.5">
            <button aria-label="Save all bookmarks">
              <svg viewBox="0 0 24 24" className="h-6 w-6">
                <path d="M1 2h15v3h-9v13h-3l-3-2z" fill="#ccd5de" />
                <path d="M7 6h15v16h-13l-2-2z" fill="#c5d0da" />
                <path d="M9 10h11M9 13h11" stroke="#dde3e9" />
                <path d="M11 17h8v4h-8z" fill="#fff" />
                <path d="M12 18h2v3h-2z" fill="#c5d0da" />
              </svg>
            </button>
            <button aria-label="Expand all">
              <svg viewBox="0 0 24 24" className="h-6 w-6" fill="none" stroke="#bcc8d5" strokeWidth="2">
                <path d="M2 7v-4h19v18h-4" stroke="#c8d2dc" />
                <path d="M2 9h13v13h-13zM4.500 15.500h8M8.500 11.500v8" />
              </svg>
            </button>
            <button aria-label="Collapse all">
              <svg viewBox="0 0 24 24" className="h-6 w-6" fill="none" stroke="#bcc8d5" strokeWidth="2">
                <path d="M2 7v-4h19v18h-4" stroke="#c8d2dc" />
                <path d="M2 9h13v13h-13zM4.500 15.500h8" />
              </svg>
            </button>
            <button aria-label="Add bookmark" className="ml-auto">
              <svg viewBox="0 0 24 20" className="h-5 w-6">
                <path d="M2 0h6v3h-6z" fill={D} />
                <path d="M0.500 2.500h23v16h-23z" fill={M} stroke={D} />
                <circle cx="16" cy="10.500" r="5.200" fill={D} stroke="#e8eef3" strokeWidth="1.300" />
              </svg>
            </button>
          </div>
          <div className="h-[139px] shrink-0 border border-l-0 border-[#828790] bg-white" />
        </aside>

        <div className="flex w-[68px] shrink-0 flex-col pl-6 pt-3" role="toolbar" aria-label="Loads and results" aria-orientation="vertical">
          {side.map((t, i) =>
            t ? (
              <button key={i} aria-label={t.label} className={"relative flex h-[30px] items-center " + (t.drop ? "-ml-1.5" : "")}>
                <Icon name={t.icon} />
                {i === 20 && (
                  <span className="absolute bottom-[3px] left-[19px] h-0 w-0 border-x-[3px] border-t-[3px] border-x-transparent border-t-black" />
                )}
                {t.drop && (
                  <span
                    className={
                      "ml-1.5 h-0 w-0 border-x-4 border-t-4 border-x-transparent " + (t.dim ? "border-t-[#707070]" : "border-t-[#202020]")
                    }
                  />
                )}
              </button>
            ) : (
              <span key={i} className="h-[29px]" />
            )
          )}
        </div>

        <section className="relative mb-[37px] mr-[9px] mt-[9px] min-w-0 flex-1 bg-white" aria-label="Model view">
          <Model />
          <Logo />
          <Triad />
          <p className="absolute inset-x-0 bottom-11 text-center font-['Liberation_Sans',sans-serif] text-[19px] leading-6">
            Design study 1 | Structural 1
          </p>
        </section>
      </main>
      <footer className="flex h-0.5 shrink-0 bg-[#1d2b40]">
        <span className="ml-[46px] w-72 border-t border-[#c0c0c0] bg-[#f0f0f0]" />
      </footer>
    </div>
  );
}
